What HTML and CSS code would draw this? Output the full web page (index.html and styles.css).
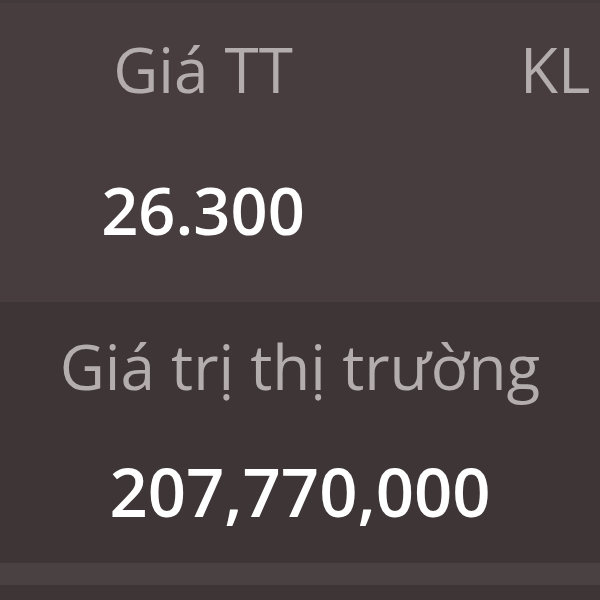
FILE: index.html
```html
<!DOCTYPE html>
<html lang="vi">
<head>
    <meta charset="UTF-8">
    <meta name="viewport" content="width=device-width, initial-scale=1.0">
    <title>Giá trị thị trường</title>
    <link rel="stylesheet" href="styles.css">
</head>
<body>
    <div id="container">
        <div class="quote">
            <div class="cell price">
                <div class="label">Giá TT</div>
                <div class="value">26.300</div>
            </div>
            <div class="cell volume">
                <div class="label">KL</div>
                <div class="value">1.000</div>
            </div>
        </div>
        <div class="summary">
            <div class="label">Giá trị thị trường</div>
            <div class="value big">207,770,000</div>
        </div>
        <div class="divider"></div>
        <div class="next"></div>
    </div>
</body>
</html>
```

FILE: styles.css
```css
body {
    margin: 0;
    padding: 0;
    font-family: "Open Sans", "Noto Sans", sans-serif;
    background-color: #3d3536;
    overflow: hidden;
}

#container {
    width: 600px;
    height: 600px;
    overflow: hidden;
}

.label {
    font-size: 62px;
    line-height: 80px;
    color: #b3adad;
    white-space: nowrap;
}

.value {
    font-size: 65px;
    line-height: 80px;
    font-weight: 600;
    color: #ffffff;
    white-space: nowrap;
}

.quote {
    display: grid;
    grid-template-columns: 406px 1fr;
    background-color: #473d3e;
    border-top: 3px solid #433a3b;
    padding: 26px 0 52px 0;
    height: 221px;
    overflow: hidden;
}

.quote .value {
    margin-top: 61px;
}

.price {
    text-align: center;
}

.volume .label {
    padding-left: 114px;
}

.volume .value {
    padding-left: 191px;
}

.summary {
    background-color: #3d3536;
    text-align: center;
    padding: 24px 0 32px 0;
    box-sizing: border-box;
    height: 261px;
}

.summary .value {
    margin-top: 45px;
}

.value.big {
    font-size: 67px;
}

.divider {
    height: 22px;
    background-color: #4a4143;
}

.next {
    height: 20px;
    background-color: #3d3536;
}
```
